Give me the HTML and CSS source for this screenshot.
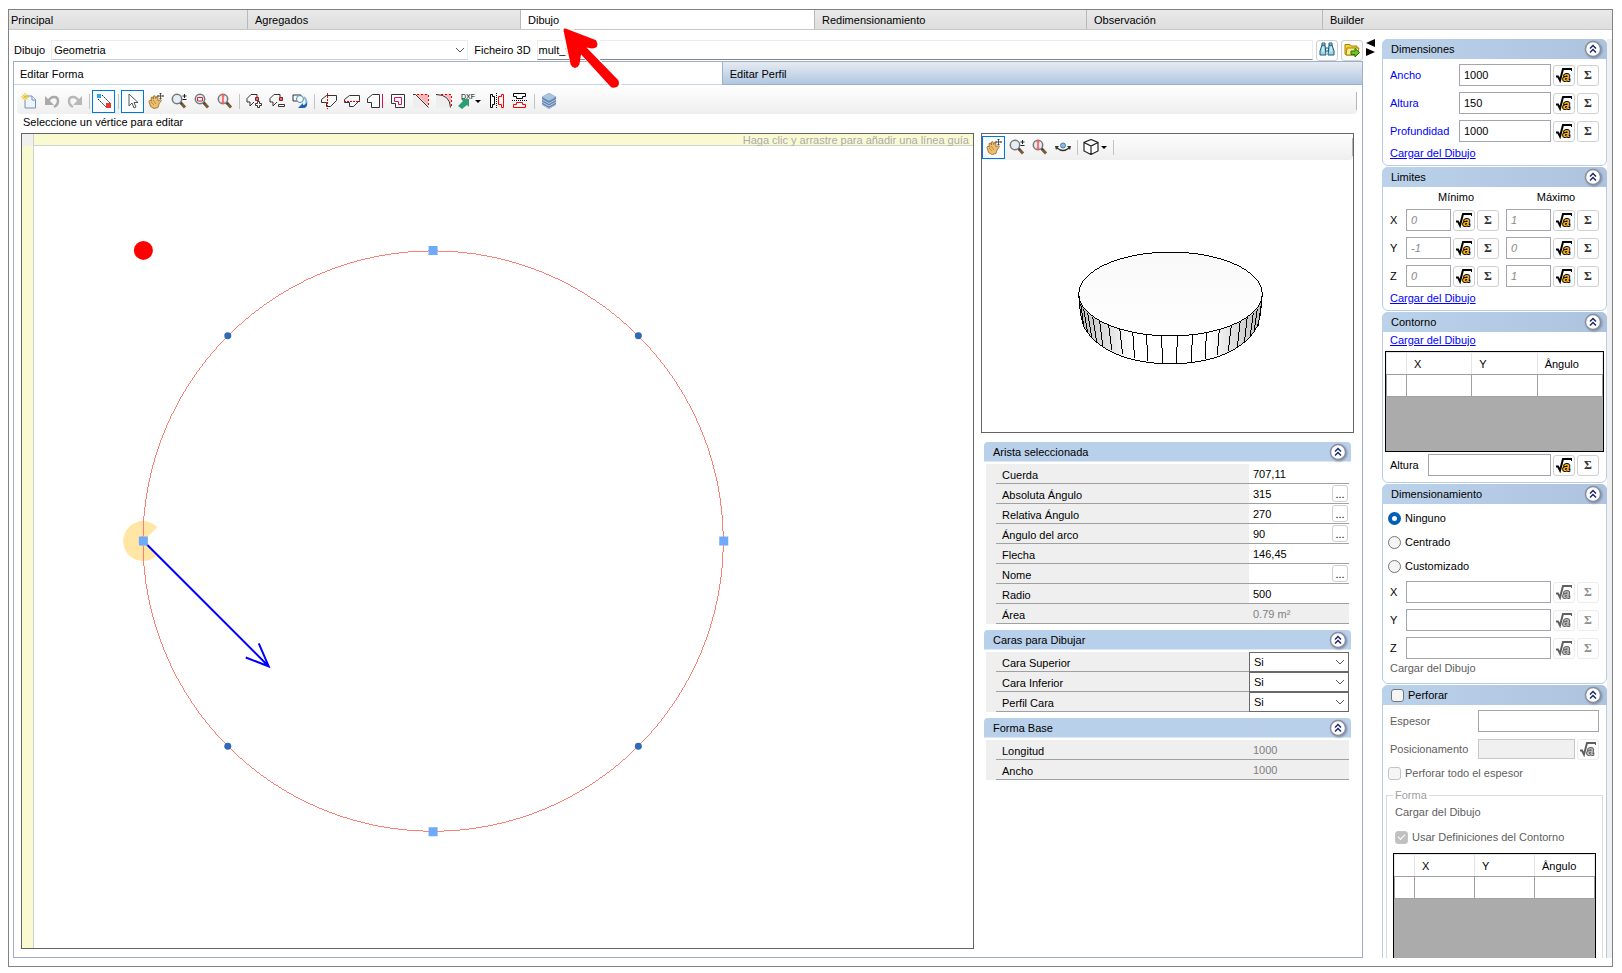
FILE: index.html
```html
<!DOCTYPE html>
<html lang="es">
<head>
  <meta charset="UTF-8">
  <title>Dibujo</title>
  <link rel="stylesheet" href="styles.css">
</head>
<body>

<!-- shared icons -->
<svg class="defs" aria-hidden="true">
  <symbol id="i-up" viewBox="0 0 18 18">
    <circle cx="9" cy="9" r="7.5" fill="#fff" stroke="#8a8fa0" stroke-width="1.4"/>
    <path d="M6 8.5l3-3 3 3M6 12.5l3-3 3 3" fill="none" stroke="#1c2b6b" stroke-width="1.5"/>
  </symbol>
  <symbol id="i-fx" viewBox="0 0 16 16">
    <path d="M0 9.500h2l2 4 3-11.500h9v2" fill="none" stroke="currentColor" stroke-width="2"/>
    <text x="7" y="14" class="fx-a">a</text>
  </symbol>
  <symbol id="i-down" viewBox="0 0 10 10">
    <path d="M1 3l4 4 4-4" fill="none" stroke="#555"/>
  </symbol>
  <symbol id="i-hand" viewBox="0 0 16 16">
    <path d="M1 8.500l1-1.500 1.500 1L3 4.500l1.500-.5 1 2L5.500 3l1.500-.3.8 2.800L8.500 3.500l1.300.4.2 4.100 2.500-1.500 1 .8-2.500 3.700-1 3.500-4 1-3.500-2z" fill="#eabf72" stroke="#9a6520" stroke-width=".8"/>
    <path d="M3 9l3 3M5 7l3 4" stroke="#b98032" stroke-width=".8"/>
    <path d="M12.500 0v6M9.500 3h6M11.500 1l1-1 1 1M11.500 5l1 1 1-1M10.500 2l-1 1 1 1M14.500 2l1 1-1 1" fill="none" stroke="#333" stroke-width=".8"/>
  </symbol>
  <symbol id="i-lens" viewBox="0 0 16 16">
    <path d="M9.500 9.500l4.500 5" stroke="#7b5c38" stroke-width="3"/>
    <path d="M9 9l2 2" stroke="#444" stroke-width="2"/>
    <circle cx="6" cy="6" r="4.700" fill="#e4eef5" stroke="#777" stroke-width="1.500"/>
  </symbol>
  <symbol id="i-zoom" viewBox="0 0 16 16">
    <use href="#i-lens"/>
    <path d="M13.500 1v4M11.500 3h4M11.500 6.500h4" stroke="#222"/>
  </symbol>
  <symbol id="i-zoomfit" viewBox="0 0 16 16">
    <use href="#i-lens"/>
    <path d="M4.500 2.500h3M6 2.500v7M4.500 9.500h3" stroke="#f66" stroke-width="1.800"/>
  </symbol>
</svg>

<div class="window">
  <nav class="tabs">
    <a href="#">Principal</a>
    <a href="#">Agregados</a>
    <a href="#" class="active">Dibujo
      <svg class="pointer" width="60" height="62" viewBox="0 0 60 62">
        <path d="M5 6L54 57" stroke="#fff" stroke-width="11" stroke-linecap="round"/>
        <path d="M2 3L36 17M2 3L13 38" stroke="#fff" stroke-width="8" stroke-linecap="round"/>
        <path d="M3 3L33 14.500Q36 20 30 20L20 18L55 54Q57 60 50 59L18 24L16 37Q13 42 10 37Z" fill="#f00" stroke="#f00" stroke-width="3" stroke-linejoin="round"/>
      </svg>
    </a>
    <a href="#">Redimensionamiento</a>
    <a href="#">Observación</a>
    <a href="#">Builder</a>
  </nav>

  <div class="content">
    <main class="editor">
      <div class="source">
        <label for="dibujo">Dibujo</label>
        <span class="select main-select">
          <select id="dibujo"><option>Geometria</option></select>
          <svg><use href="#i-down"/></svg>
        </span>
        <label for="fichero">Ficheiro 3D</label>
        <input type="text" id="fichero" class="file" value="mult_vani">
        <button class="btn" aria-label="Buscar">
          <svg width="16" height="16" viewBox="0 0 16 16">
            <path d="M3 3h3l1 10H1V9zM10 3h3l2 6v4H9z" fill="#9ed4e4" stroke="#1f5c7a"/>
            <path d="M3 1h3v2H3zM10 1h3v2h-3zM6.500 6h3v3h-3z" fill="#d5edf4" stroke="#1f5c7a"/>
            <path d="M4 5v5M12 5v5" stroke="#f4ffff"/>
          </svg>
        </button>
        <button class="btn" aria-label="Abrir">
          <svg width="16" height="16" viewBox="0 0 16 16">
            <path d="M1 2.500h5l1 1.500h6v9H2L1 12z" fill="#f3d03e" stroke="#a98500"/>
            <path d="M3 6h12l-2 7H2z" fill="#fdec8c" stroke="#a98500"/>
            <path d="M7 9h4V6.500l4.500 4L11 15v-2.500H7z" fill="#6cc820" stroke="#2f6d0c"/>
          </svg>
        </button>
        <svg class="arrows" width="9" height="18" viewBox="0 0 9 18"><path d="M9 0v8L0 4zM0 9v8l9-4z"/></svg>
      </div>

      <section class="sheet">
        <nav class="subtabs">
          <a href="#" class="active">Editar Forma</a>
          <a href="#">Editar Perfil</a>
        </nav>

        <div class="toolbar main-toolbar">
          <button class="tool" aria-label="Nuevo"><svg viewBox="0 0 16 16"><path d="M5 3h6l3.500 3.500V15H4V7" fill="#edf4fd" stroke="#7191bd"/><path d="M11 3v4h3.500" fill="#fff" stroke="#7191bd"/><path d="M4 0v8M0 4h8M1.500 1.500l5 5M6.500 1.500l-5 5" stroke="#e8c11c"/></svg></button>
          <button class="tool" aria-label="Deshacer"><svg viewBox="0 0 16 16"><path d="M4 9q2-5 6-5 4 0 4 4 0 4-4 6" fill="none" stroke="#aaa" stroke-width="2.500"/><path d="M1 3v9h9z" fill="#aaa"/></svg></button>
          <button class="tool" aria-label="Rehacer"><svg viewBox="0 0 16 16"><path d="M12 9q-2-5-6-5-4 0-4 4 0 4 4 6" fill="none" stroke="#b8b8b8" stroke-width="2.500"/><path d="M15 3v9H6z" fill="#b8b8b8"/></svg></button>
          <span class="sep"></span>
          <button class="tool on" aria-label="Vértices"><svg viewBox="0 0 16 16"><path d="M6 2l8 8M2 6l8 8" stroke="#222" stroke-dasharray="2 1"/><path d="M1 1h4v4H1z" fill="#29a9e8"/><path d="M10 10h5v5h-5z" fill="#e8392c"/></svg></button>
          <span class="sep"></span>
          <button class="tool on" aria-label="Seleccionar"><svg viewBox="0 0 16 16"><path d="M4 1v12l3-3 2 5 2-1-2-4.500h4z" fill="#fff" stroke="#555"/></svg></button>
          <button class="tool" aria-label="Mover"><svg><use href="#i-hand"/></svg></button>
          <button class="tool" aria-label="Zoom"><svg><use href="#i-zoom"/></svg></button>
          <button class="tool" aria-label="Zoom ventana"><svg viewBox="0 0 16 16"><use href="#i-lens"/><path d="M3.500 4.500h5v3.500h-5z" fill="none" stroke="#d22a3a"/></svg></button>
          <button class="tool" aria-label="Zoom total"><svg><use href="#i-zoomfit"/></svg></button>
          <span class="sep"></span>
          <button class="tool" aria-label="Añadir vértice"><svg viewBox="0 0 16 16"><path d="M11 4V1.500H5L1 5.500V9h3v4l4-4" fill="none" stroke="#333"/><path d="M9.500 4.500h3v3h-3z" fill="#f66" stroke="#822"/><path d="M11.500 8.500h2v2h2v2h-2v2h-2v-2h-2v-2h2z" fill="#fff" stroke="#333"/></svg></button>
          <button class="tool" aria-label="Quitar vértice"><svg viewBox="0 0 16 16"><path d="M11 4V1.500H5L1 5.500V9h3v4l4-4" fill="none" stroke="#333"/><path d="M10.500 4.500h3v3h-3z" fill="#f66" stroke="#822"/><path d="M9.500 11.500h6v2h-6z" fill="#fff" stroke="#333"/></svg></button>
          <button class="tool" aria-label="Girar"><svg viewBox="0 0 16 16"><path d="M7 8H1V2h8v3" fill="none" stroke="#333"/><circle cx="8" cy="6" r="3.500" fill="#f6fbff" stroke="#488ca0"/><path d="M12 4q5 5 0 10" fill="none" stroke="#8eb8dc" stroke-width="2"/><path d="M6 15l5-5v2q3 0 4-3 1 6-4 6z" fill="#1c62b4"/></svg></button>
          <span class="sep"></span>
          <button class="tool" aria-label="Dividir vertical"><svg viewBox="0 0 16 16"><path d="M5.500 2.500h10v5l-6 6h-4v-4h-5v-3z" fill="#fafafa" stroke="#333"/><path d="M6.500 0v16" stroke="#e00" stroke-dasharray="2 1"/></svg></button>
          <button class="tool" aria-label="Dividir horizontal"><svg viewBox="0 0 16 16"><path d="M5.500 2.500h10v5l-6 6h-4v-4h-5v-3z" fill="#fafafa" stroke="#333"/><path d="M0 8.500h16" stroke="#e00" stroke-dasharray="2 1"/></svg></button>
          <button class="tool" aria-label="Alinear"><svg viewBox="0 0 16 16"><path d="M12.500 1.500h-7l-5 4v4h4v5h8z" fill="#fafafa" stroke="#333"/><path d="M15.500 1v14" stroke="#d4145a"/></svg></button>
          <button class="tool" aria-label="Contorno interior"><svg viewBox="0 0 16 16"><path d="M1.500 1.500h13v13h-9v-4h-4z" fill="#fafafa" stroke="#333"/><path d="M4.500 4.500h7v7h-3v-3h-4z" fill="none" stroke="#d4145a"/></svg></button>
          <button class="tool" aria-label="Chaflán"><svg viewBox="0 0 16 16"><path d="M0 1l15 14H0z" fill="#eee"/><path d="M3 1h12v12z" fill="#f7b5b5"/><path d="M4 1.500h11.500V14" fill="none" stroke="#e00" stroke-dasharray="2 2"/><path d="M0 1.500h2.500l13 13" fill="none" stroke="#333"/></svg></button>
          <button class="tool" aria-label="Redondear"><svg viewBox="0 0 16 16"><path d="M0 1q14 0 15 14H0z" fill="#eee"/><path d="M5 1h10v12Q13 2 5 1z" fill="#f7b5b5"/><path d="M5 1.500h10.500V14" fill="none" stroke="#e00" stroke-dasharray="2 2"/><path d="M0 1.500q14 0 14.500 13" fill="none" stroke="#333"/></svg></button>
          <button class="tool wide" aria-label="Importar DXF"><svg class="dxf" viewBox="0 0 24 16"><path d="M0 13l5-5-2-2h8v8L9 12l-5 4z" fill="#2b9f74"/><text x="3" y="6" class="dxf-text">DXF</text><path d="M17 7h6l-3 3z"/></svg></button>
          <button class="tool" aria-label="Espejo vertical"><svg viewBox="0 0 16 16"><path d="M1.500 1.500h2v2h2v8h-2v3h-2z" fill="#fff" stroke="#000"/><path d="M14.500 1.500h-2v2h-3v8h3v3h2z" fill="#fff" stroke="#f00"/><path d="M7.500 0v16" stroke="#000" stroke-dasharray="1 1"/></svg></button>
          <button class="tool" aria-label="Espejo horizontal"><svg viewBox="0 0 16 16"><path d="M1.500 .5h12v3h-3v2h-6v-2h-3z" fill="#fff" stroke="#000"/><path d="M1.500 14.500h12v-3h-3v-2h-6v2h-3z" fill="#fff" stroke="#f00"/><path d="M0 7.500h16" stroke="#000" stroke-dasharray="1 1"/></svg></button>
          <span class="sep"></span>
          <button class="tool" aria-label="Capas"><svg viewBox="0 0 16 16"><path d="M1 4v8l7 4 7-4V4z" fill="#6484ad"/><path d="M1 9l7 4 7-4M1 6.500l7 4 7-4M1 11.500l7 4 7-4" fill="none" stroke="#b7cde8"/><path d="M8 0l7 4-7 4-7-4z" fill="#a9c3e2" stroke="#7f9cc2" stroke-width=".5"/></svg></button>
          <span class="end"></span>
        </div>
        <p class="hint">Seleccione un vértice para editar</p>

        <div class="workspace">
          <div class="canvas">
            <div class="corner"></div>
            <div class="ruler-top">Haga clic y arrastre para añadir una línea guía</div>
            <div class="ruler-left"></div>
            <svg class="drawing" viewBox="0 0 940 790" preserveAspectRatio="xMinYMin meet">
              <path d="M109.500 395.500L123.500 381.500A20 20 0 1 0 123.500 409.500Z" fill="#ffe6a4"/>
              <circle class="crisp" cx="399.500" cy="395.500" r="290.500" fill="none" stroke="#fa8072"/>
              <circle cx="109.500" cy="104.500" r="9.500" fill="#f00"/>
              <g fill="#2e6ab8">
                <circle cx="194" cy="190" r="3.500"/><circle cx="605" cy="190" r="3.500"/>
                <circle cx="194" cy="601" r="3.500"/><circle cx="605" cy="601" r="3.500"/>
              </g>
              <path d="M113 399L235 521M225 498L235 521L212 512" fill="none" stroke="#00f" stroke-width="2"/>
              <g fill="#6eaaf9">
                <path d="M395 100h9v9h-9zM395 682h9v9h-9zM105 391h9v9h-9zM686 391h9v9h-9z"/>
              </g>
            </svg>
          </div>

          <div class="inspector">
            <div class="preview">
              <div class="toolbar">
                <button class="tool on" aria-label="Mover"><svg><use href="#i-hand"/></svg></button>
                <button class="tool" aria-label="Zoom"><svg><use href="#i-zoom"/></svg></button>
                <button class="tool" aria-label="Zoom total"><svg><use href="#i-zoomfit"/></svg></button>
                <button class="tool" aria-label="Orbitar"><svg viewBox="0 0 16 16"><path d="M2 9q6 5 12 0" fill="none" stroke="#333" stroke-width="1.500"/><path d="M0 7h4l-3 4zM16 7h-4l3 4z" fill="#333"/><circle cx="8" cy="6.500" r="2.500" fill="#8db7e4" stroke="#4e79aa"/></svg></button>
                <span class="sep"></span>
                <button class="tool wide" aria-label="Vista"><svg class="dxf" viewBox="0 0 24 16"><path d="M8 .5l7 3v8.500l-7 3.500-7-3.500V3.500zM1 3.500l7 3.500 7-3.500M8 7v8.500" fill="#fff" stroke="#222" stroke-width="1.200"/><path d="M18 7h6l-3 3z"/></svg></button>
                <span class="sep"></span>
                <span class="end"></span>
              </div>
              <svg class="solid crisp" viewBox="0 0 372 272">
                <defs>
                  <linearGradient id="side"><stop offset="0" stop-color="#bbb"/><stop offset=".3" stop-color="#fff"/><stop offset=".7" stop-color="#fff"/><stop offset="1" stop-color="#bbb"/></linearGradient>
                  <linearGradient id="top" x1="0" y1="0" x2="0" y2="1"><stop offset="0" stop-color="#f8f8f8"/><stop offset="1" stop-color="#fff"/></linearGradient>
                </defs>
                <path d="M97 134C98 148 99 162 104 170C118 192 150 204 189 204S260 192 274 170C279 162 280 148 281 134z" fill="url(#side)" stroke="#000"/>
                <path d="M99 144l3 22M102 149l4 24M106 153l4 24M111 157l4 25M118 161l3 25M127 165l3 25M138 168l3 26M151 171l2 27M165 172l1 29M180 173l1 31M196 173l-1 31M211 172l-1 30M225 170l-1 29M238 168l-2 27M250 165l-3 26M259 161l-3 26M266 157l-3 26M272 153l-3 23M276 149l-3 22M280 144l-3 22" stroke="#000"/>
                <ellipse cx="189" cy="134" rx="92" ry="42" fill="url(#top)" stroke="#000"/>
              </svg>
            </div>

            <section class="group">
              <h3>Arista seleccionada <button class="fold" aria-label="Contraer"><svg><use href="#i-up"/></svg></button></h3>
              <div class="prop"><label for="p1">Cuerda</label><input type="text" id="p1" value="707,11"></div>
              <div class="prop"><label for="p2">Absoluta Ángulo</label><input type="text" id="p2" value="315"><button class="dots" aria-label="Editar">...</button></div>
              <div class="prop"><label for="p3">Relativa Ángulo</label><input type="text" id="p3" value="270"><button class="dots" aria-label="Editar">...</button></div>
              <div class="prop"><label for="p4">Ángulo del arco</label><input type="text" id="p4" value="90"><button class="dots" aria-label="Editar">...</button></div>
              <div class="prop"><label for="p5">Flecha</label><input type="text" id="p5" value="146,45"></div>
              <div class="prop"><label for="p6">Nome</label><input type="text" id="p6"><button class="dots" aria-label="Editar">...</button></div>
              <div class="prop"><label for="p7">Radio</label><input type="text" id="p7" value="500"></div>
              <div class="prop"><label for="p8">Área</label><input type="text" id="p8" value="0.79 m²" disabled></div>
            </section>

            <section class="group">
              <h3>Caras para Dibujar <button class="fold" aria-label="Contraer"><svg><use href="#i-up"/></svg></button></h3>
              <div class="prop"><label for="c1">Cara Superior</label><span class="select boxed"><select id="c1"><option>Si</option><option>No</option></select><svg><use href="#i-down"/></svg></span></div>
              <div class="prop"><label for="c2">Cara Inferior</label><span class="select boxed"><select id="c2"><option>Si</option><option>No</option></select><svg><use href="#i-down"/></svg></span></div>
              <div class="prop"><label for="c3">Perfil Cara</label><span class="select boxed"><select id="c3"><option>Si</option><option>No</option></select><svg><use href="#i-down"/></svg></span></div>
            </section>

            <section class="group">
              <h3>Forma Base <button class="fold" aria-label="Contraer"><svg><use href="#i-up"/></svg></button></h3>
              <div class="prop"><label for="f1">Longitud</label><input type="text" id="f1" value="1000" disabled></div>
              <div class="prop"><label for="f2">Ancho</label><input type="text" id="f2" value="1000" disabled></div>
            </section>
          </div>
        </div>
      </section>
    </main>

    <aside class="side">
      <section class="panel">
        <h2>Dimensiones <button class="fold" aria-label="Contraer"><svg><use href="#i-up"/></svg></button></h2>
        <div class="row blue"><label for="ancho">Ancho</label><input type="text" id="ancho" value="1000"><button class="btn" aria-label="Fórmula"><svg class="fx"><use href="#i-fx"/></svg></button><button class="btn sigma">Σ</button></div>
        <div class="row blue"><label for="altura">Altura</label><input type="text" id="altura" value="150"><button class="btn" aria-label="Fórmula"><svg class="fx"><use href="#i-fx"/></svg></button><button class="btn sigma">Σ</button></div>
        <div class="row blue"><label for="prof">Profundidad</label><input type="text" id="prof" value="1000"><button class="btn" aria-label="Fórmula"><svg class="fx"><use href="#i-fx"/></svg></button><button class="btn sigma">Σ</button></div>
        <a href="#" class="load">Cargar del Dibujo</a>
      </section>

      <section class="panel">
        <h2>Limites <button class="fold" aria-label="Contraer"><svg><use href="#i-up"/></svg></button></h2>
        <div class="limits-head"><span>Mínimo</span><span>Máximo</span></div>
        <div class="row axis limits"><label for="xmin">X</label><input type="text" id="xmin" value="0"><button class="btn" aria-label="Fórmula"><svg class="fx"><use href="#i-fx"/></svg></button><button class="btn sigma">Σ</button><input type="text" class="max" aria-label="X máximo" value="1"><button class="btn" aria-label="Fórmula"><svg class="fx"><use href="#i-fx"/></svg></button><button class="btn sigma">Σ</button></div>
        <div class="row axis limits"><label for="ymin">Y</label><input type="text" id="ymin" value="-1"><button class="btn" aria-label="Fórmula"><svg class="fx"><use href="#i-fx"/></svg></button><button class="btn sigma">Σ</button><input type="text" class="max" aria-label="Y máximo" value="0"><button class="btn" aria-label="Fórmula"><svg class="fx"><use href="#i-fx"/></svg></button><button class="btn sigma">Σ</button></div>
        <div class="row axis limits"><label for="zmin">Z</label><input type="text" id="zmin" value="0"><button class="btn" aria-label="Fórmula"><svg class="fx"><use href="#i-fx"/></svg></button><button class="btn sigma">Σ</button><input type="text" class="max" aria-label="Z máximo" value="1"><button class="btn" aria-label="Fórmula"><svg class="fx"><use href="#i-fx"/></svg></button><button class="btn sigma">Σ</button></div>
        <a href="#" class="load">Cargar del Dibujo</a>
      </section>

      <section class="panel">
        <h2>Contorno <button class="fold" aria-label="Contraer"><svg><use href="#i-up"/></svg></button></h2>
        <a href="#" class="load first">Cargar del Dibujo</a>
        <div class="grid">
          <table>
            <thead><tr><th class="rowhead"></th><th>X</th><th>Y</th><th>Ângulo</th></tr></thead>
            <tbody><tr><td></td><td></td><td></td><td></td></tr></tbody>
          </table>
        </div>
        <div class="row short"><label for="calt">Altura</label><input type="text" id="calt"><button class="btn" aria-label="Fórmula"><svg class="fx"><use href="#i-fx"/></svg></button><button class="btn sigma">Σ</button></div>
      </section>

      <section class="panel">
        <h2>Dimensionamiento <button class="fold" aria-label="Contraer"><svg><use href="#i-up"/></svg></button></h2>
        <div class="radios">
          <label class="check"><input type="radio" name="dim" checked> Ninguno</label>
          <label class="check"><input type="radio" name="dim"> Centrado</label>
          <label class="check"><input type="radio" name="dim"> Customizado</label>
        </div>
        <div class="row axis"><label for="dx">X</label><input type="text" id="dx"><button class="btn" disabled aria-label="Fórmula"><svg class="fx"><use href="#i-fx"/></svg></button><button class="btn sigma" disabled>Σ</button></div>
        <div class="row axis"><label for="dy">Y</label><input type="text" id="dy"><button class="btn" disabled aria-label="Fórmula"><svg class="fx"><use href="#i-fx"/></svg></button><button class="btn sigma" disabled>Σ</button></div>
        <div class="row axis"><label for="dz">Z</label><input type="text" id="dz"><button class="btn" disabled aria-label="Fórmula"><svg class="fx"><use href="#i-fx"/></svg></button><button class="btn sigma" disabled>Σ</button></div>
        <a class="load off">Cargar del Dibujo</a>
      </section>

      <section class="panel perforar">
        <h2><label class="head-check"><input type="checkbox"> Perforar</label> <button class="fold" aria-label="Contraer"><svg><use href="#i-up"/></svg></button></h2>
        <div class="row long gray"><label for="espesor">Espesor</label><input type="text" id="espesor"></div>
        <div class="row long gray"><label for="pos">Posicionamento</label><input type="text" id="pos" disabled><button class="btn" disabled aria-label="Fórmula"><svg class="fx"><use href="#i-fx"/></svg></button></div>
        <label class="check gray"><input type="checkbox" disabled> Perforar todo el espesor</label>
        <fieldset>
          <legend>Forma</legend>
          <a class="load off">Cargar del Dibujo</a>
          <label class="check gray"><input type="checkbox" checked disabled> Usar Definiciones del Contorno</label>
          <div class="grid">
            <table>
              <thead><tr><th class="rowhead"></th><th>X</th><th>Y</th><th>Ângulo</th></tr></thead>
              <tbody><tr><td></td><td></td><td></td><td></td></tr></tbody>
            </table>
          </div>
        </fieldset>
      </section>
    </aside>
  </div>
</div>

</body>
</html>
```

FILE: styles.css
```css
* {
  box-sizing: border-box;
}

body {
  margin: 0;
  height: 100vh;
  padding: 9px 9px 6px 8px;
  background: #fff;
  color: #000;
  font: 11px/16px "Liberation Sans", Arial, sans-serif;
}

input, select, button {
  font: inherit;
  color: inherit;
}

h2, h3, p {
  margin: 0;
  font-size: 11px;
  font-weight: normal;
}

.defs {
  display: none;
}

.crisp {
  shape-rendering: crispEdges;
}

.window {
  display: flex;
  flex-direction: column;
  height: 100%;
  border: 1px solid #828282;
}

/* top tabs */
.tabs {
  display: grid;
  grid-template-columns: 238fr 273fr 294fr 272fr 236fr 290fr;
  height: 20px;
  flex: none;
  border-bottom: 1px solid #c8c8c8;
}

.tabs a {
  position: relative;
  padding: 2px 0 0 7px;
  color: #000;
  text-decoration: none;
  background: linear-gradient(#e9e9e9, #dedede);
  border-left: 1px solid #b9b9b9;
}

.tabs a:first-child {
  padding-left: 2px;
  border-left: 0;
}

.tabs .active {
  background: #fff;
}

.pointer {
  position: absolute;
  z-index: 5;
  left: 41px;
  top: 17px;
  overflow: visible;
  fill: none;
}

.content {
  display: flex;
  flex: 1;
  min-height: 0;
  padding: 9px 0 8px 4px;
}

.editor {
  display: flex;
  flex-direction: column;
  flex: 1;
  min-width: 0;
}

/* source row */
.source {
  display: flex;
  align-items: center;
  height: 22px;
  gap: 2px;
}

.source label {
  padding: 0 4px 0 1px;
  white-space: nowrap;
}

.select {
  position: relative;
  display: block;
}

.select select {
  width: 100%;
  height: 100%;
  padding: 0 4px;
  appearance: none;
  border: 0;
  background: #fff;
  border-radius: 0;
}

.select svg {
  position: absolute;
  right: 3px;
  top: 50%;
  width: 10px;
  height: 10px;
  margin-top: -5px;
  pointer-events: none;
}

.main-select {
  flex: 418;
  height: 20px;
  margin-right: 3px;
}

.main-select select {
  padding: 0 2px;
  border: 1px solid #ececec;
  border-bottom-color: #ccc;
}

.file {
  flex: 774;
  min-width: 0;
  height: 20px;
  padding: 0 1px;
  border: 1px solid #ececec;
  border-bottom: 1px solid #858585;
}

.btn {
  display: flex;
  align-items: center;
  justify-content: center;
  flex: none;
  width: 22px;
  height: 21px;
  padding: 0;
  background: #fdfdfd;
  border: 1px solid #d0d0d0;
  border-radius: 3px;
}

.arrows {
  margin: 0 7px 4px 1px;
}

.source .btn {
  margin-left: 1px;
}

/* inner sheet */
.sheet {
  display: flex;
  flex-direction: column;
  flex: 1;
  min-height: 0;
  margin-right: 19px;
  border: 1px solid #9ab0cc;
}

.subtabs {
  display: flex;
  flex: none;
  height: 23px;
}

.subtabs a {
  flex: 640;
  padding: 4px 7px;
  color: #000;
  text-decoration: none;
  background: linear-gradient(#e6ebf1, #b1c7e2);
  border-left: 1px solid #9ab0cc;
  border-bottom: 1px solid #9ab0cc;
}

.subtabs .active {
  flex: 711;
  padding-left: 6px;
  background: #fff;
  border-left: 0;
  border-bottom-color: #c5d5e6;
}

.toolbar {
  display: flex;
  align-items: center;
  flex: none;
  height: 26px;
  background: linear-gradient(#fdfdfd, #efefef);
  border-radius: 4px;
}

.main-toolbar {
  margin: 3px 5px 0 3px;
}

.tool {
  display: flex;
  align-items: center;
  justify-content: center;
  flex: none;
  width: 23px;
  height: 23px;
  padding: 0;
  background: none;
  border: 1px solid transparent;
}

.tool.on {
  background: #fafcff;
  border-color: #0078d7;
}

.tool svg {
  flex: none;
  width: 16px;
  height: 16px;
}

.tool.wide {
  width: 30px;
}

.tool .dxf {
  width: 24px;
}

.dxf-text {
  font-size: 7px;
}

.sep {
  flex: none;
  width: 1px;
  height: 15px;
  margin: 0 2px 0 3px;
  background: #c4c4c4;
}

.end {
  width: 1px;
  height: 18px;
  margin-left: auto;
  background: #b5b5b5;
}

.hint {
  flex: none;
  padding: 0 9px;
  height: 19px;
}

.workspace {
  display: flex;
  flex: 1;
  min-height: 0;
  gap: 7px;
  padding: 0 8px 8px 7px;
}

/* drawing area */
.canvas {
  display: grid;
  grid-template: 12px 1fr / 12px 1fr;
  flex: 1;
  min-width: 0;
  border: 1px solid #646464;
}

.corner {
  background: #f0f0f0;
  border-right: 1px solid #d0d0d0;
}

.ruler-top {
  padding-right: 4px;
  line-height: 12px;
  text-align: right;
  color: #aaa;
  background: #fafad2;
  border-bottom: 1px solid #d0d0d0;
}

.ruler-left {
  background: #fafad2;
  border-right: 1px solid #d0d0d0;
}

.drawing {
  width: 100%;
  height: 100%;
  min-height: 0;
}

.inspector {
  width: 373px;
  flex: none;
}

.preview {
  height: 300px;
  border: 1px solid #646464;
}

.solid {
  display: block;
  width: 100%;
  height: 272px;
}

/* property groups */
.group {
  margin: 6px 3px 0;
}

.preview + .group {
  margin-top: 9px;
}

.group h3 {
  display: flex;
  justify-content: space-between;
  height: 20px;
  padding: 2px 4px 0 9px;
  margin-bottom: 2px;
  background: #b9d0ea;
  border: 0 solid #dce8f5;
  border-bottom-width: 1px;
  border-radius: 4px 4px 0 0;
}

.fold {
  width: 18px;
  height: 18px;
  margin-top: -1px;
  padding: 0;
  background: none;
  border: 0;
  filter: drop-shadow(1px 1px 1px #7a86a0);
}

.fold svg {
  display: block;
  width: 18px;
  height: 18px;
}

.prop {
  position: relative;
  display: flex;
  height: 20px;
  margin: 0 2px;
  background: #efefef;
}

.prop::after {
  content: "";
  position: absolute;
  left: 10px;
  right: 0;
  bottom: 0;
  height: 1px;
  background: #a0a0a0;
}

.prop label {
  flex: 1;
  padding: 3px 0 0 16px;
}

.prop input,
.prop .select {
  width: 100px;
  height: 19px;
  padding: 0 4px;
  border: 0;
}

.prop input:disabled {
  color: #808080;
  background: #efefef;
}

.prop .select {
  height: 20px;
  padding: 0;
  border: 1px solid #696969;
  z-index: 1;
}

.dots {
  position: absolute;
  right: 1px;
  top: 1px;
  width: 16px;
  height: 17px;
  padding: 0;
  line-height: 14px;
  background: #fff;
  border: 1px solid #d0d0d0;
  border-radius: 3px;
}

/* right side panels */
.side {
  flex: none;
  width: 230px;
  border-right: 5px solid #f0f0f0;
  overflow: hidden;
}

.panel {
  margin-bottom: 1px;
  padding-bottom: 2px;
  border: 1px solid #b5cde8;
  border-radius: 6px;
}

.panel h2 {
  display: flex;
  justify-content: space-between;
  height: 20px;
  margin: -1px -1px 5px;
  padding: 2px 5px 0 9px;
  background: linear-gradient(90deg, #bbd2eb, #aec3de);
  border-radius: 6px 6px 0 0;
}

.row {
  display: flex;
  align-items: center;
  height: 22px;
  margin: 0 7px 6px 7px;
  gap: 2px;
}

.row label {
  flex: none;
  width: 67px;
}

.row input {
  flex: 1;
  min-width: 0;
  height: 22px;
  padding: 0 4px;
  border: 1px solid #a5a6ad;
}

.row.axis label { width: 14px; }
.row.short label { width: 36px; }
.row.long label { width: 86px; }
.row.short { margin-bottom: 4px; }

.row.long input:disabled {
  height: 20px;
  background: #f0f0f0;
  border-color: #c8c8c8;
}

.blue label {
  color: #00f;
}

.gray {
  color: #606060;
}

.limits input {
  color: #8a8a8a;
  font-style: italic;
}

.limits .max {
  margin-left: 5px;
}

.limits-head {
  display: grid;
  grid-template-columns: 1fr 1fr;
  height: 20px;
  margin-top: -3px;
  padding-left: 23px;
  text-align: center;
  line-height: 16px;
}

.sigma {
  color: #333;
  font: bold 12px/16px "Liberation Serif", serif;
}

.fx {
  width: 16px;
  height: 16px;
}

.fx-a {
  font: italic bold 12px "Liberation Sans", Arial, sans-serif;
  fill: #fdb813;
  stroke: currentColor;
  stroke-width: 2px;
  paint-order: stroke;
}

.btn:disabled {
  color: #606060;
  border-color: #ececec;
}

.btn:disabled .fx {
  filter: grayscale(1);
}

.sigma:disabled {
  color: #909090;
}

.load {
  display: block;
  height: 16px;
  margin: -1px 7px 0;
  line-height: 12px;
  color: #00f;
}

.load.off {
  height: 19px;
  color: #606060;
}

.load.first {
  height: 17px;
  margin-top: -3px;
}

.axis + .off {
  margin-top: -3px;
}

/* data grids */
.grid {
  height: 101px;
  margin: 0 2px 2px;
  background: #ababab;
  border: 1px solid #000;
}

.grid table {
  width: 100%;
  table-layout: fixed;
  border-collapse: collapse;
  background: #fff;
}

.grid th, .grid td {
  height: 22px;
  padding: 0 7px;
  text-align: left;
  font-weight: normal;
  border: 1px solid #a0a0a0;
}

.grid th {
  border-color: #e5e5e5;
  border-bottom-color: #a0a0a0;
}

.grid .rowhead {
  width: 20px;
  padding: 0;
}

/* radios and tick boxes */
.check {
  display: flex;
  align-items: center;
  height: 24px;
  margin-left: 5px;
  gap: 4px;
}

.radios {
  margin: -3px 0 3px;
}

.row + .check {
  margin-top: -5px;
}

input[type="radio"], input[type="checkbox"] {
  appearance: none;
  flex: none;
  width: 13px;
  height: 13px;
  margin: 0;
  background: #f5f5f5;
  border: 1px solid #767676;
  border-radius: 3px;
}

input[type="radio"] {
  border-radius: 50%;
}

input[type="radio"]:checked {
  background: #fff;
  border: 4px solid #005fb8;
}

input[type="checkbox"]:disabled {
  border-color: #c4c4c4;
}

input[type="checkbox"]:checked {
  background: #c0c0c0;
}

input[type="checkbox"]:checked::after {
  content: "";
  display: block;
  width: 6px;
  height: 3px;
  margin: 2px;
  border: solid #fff;
  border-width: 0 0 1px 1px;
  transform: rotate(-45deg);
}

.head-check {
  display: flex;
  align-items: center;
  height: 16px;
  gap: 4px;
}

fieldset {
  min-width: 0;
  margin: 3px 3px 0;
  padding: 2px 5px 0;
  border: 1px solid #dcdcdc;
}

legend {
  height: 14px;
  margin-left: 1px;
  padding: 0 2px;
  line-height: 14px;
  color: #a0a0a0;
}

fieldset .load {
  margin: 2px 3px 0;
}

fieldset .check {
  margin-left: 3px;
}

fieldset .grid {
  height: 180px;
  margin: 4px 1px 0;
}
```
